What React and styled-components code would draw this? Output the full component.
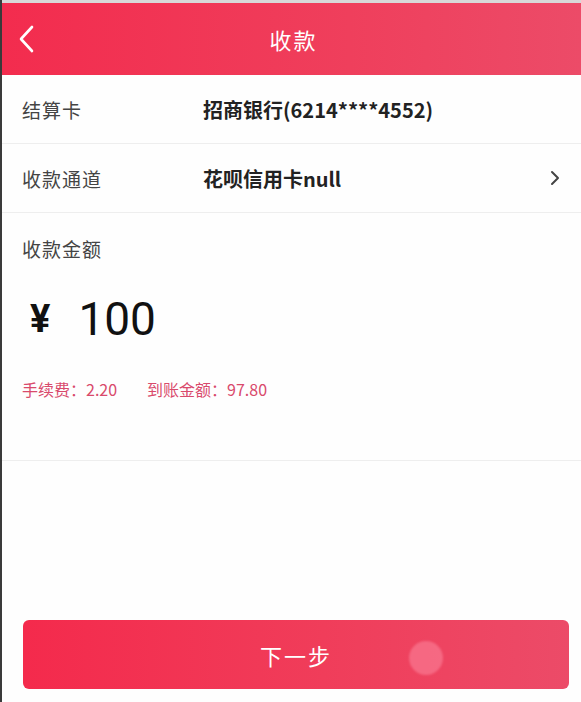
import React from "react";
import styled, { createGlobalStyle } from "styled-components";

const Global = createGlobalStyle`
  html, body { margin: 0; padding: 0; background: #fefefe; }
  body { font-family: "Noto Sans CJK SC", "Noto Sans", sans-serif; }
`;

const Page = styled.div`
  width: 581px;
  height: 702px;
  box-sizing: border-box;
  border-left: 2px solid #3a3a3a;
  background: #fefefe;
  display: flex;
  flex-direction: column;
  position: relative;
  overflow: hidden;
`;

const TopStrip = styled.div`
  height: 3px;
  background: #d8d8d8;
`;

const Header = styled.header`
  height: 72px;
  background: linear-gradient(90deg, #f32c4e 0%, #ef3f5c 60%, #ec4b68 100%);
  display: flex;
  align-items: center;
  justify-content: center;
  position: relative;
  color: #fff;
`;

const Back = styled.div`
  position: absolute;
  left: 14px;
  top: 22px;
  width: 22px;
  height: 28px;
`;

const Title = styled.h1`
  margin: 0 0 0 4px;
  font-size: 22px;
  font-weight: 400;
  letter-spacing: 2px;
`;

const Row = styled.div`
  height: 68px;
  display: flex;
  align-items: center;
  padding: 0 20px 0 20px;
  border-bottom: 1px solid #eeeeee;
`;

const Label = styled.span`
  width: 181px;
  font-size: 19px;
  color: #444;
  letter-spacing: 1px;
`;

const Value = styled.span`
  flex: 1;
  font-size: 20px;
  font-weight: 700;
  color: #222;
`;

const Chevron = styled.div`
  width: 12px;
  height: 16px;
  display: flex;
`;

const AmountSection = styled.section`
  height: 248px;
  border-bottom: 1px solid #eeeeee;
  padding: 22px 20px 0;
  box-sizing: border-box;
  display: flex;
  flex-direction: column;
`;

const AmountRow = styled.div`
  display: flex;
  align-items: center;
  margin-top: 27px;
  padding-left: 8px;
  height: 60px;
  color: #111;
  font-family: Roboto, "Open Sans", sans-serif;
`;

const Yen = styled.span`
  font-size: 38px;
  font-weight: 700;
  margin-right: 28px;
`;

const Amount = styled.span`
  font-size: 46px;
  font-weight: 400;
`;

const FeeLine = styled.div`
  margin-top: 28px;
  display: flex;
  gap: 30px;
  font-size: 16px;
  color: #d94a6c;
`;

const Spacer = styled.div`
  flex: 1;
`;

const ButtonWrap = styled.div`
  padding: 0 12px 13px 21px;
`;

const NextButton = styled.button`
  width: 100%;
  height: 69px;
  border: none;
  border-radius: 6px;
  background: linear-gradient(90deg, #f42a4c 0%, #f03d5a 55%, #ec4b68 100%);
  color: #fff;
  font-family: "Noto Sans CJK SC", sans-serif;
  font-size: 22px;
  letter-spacing: 2px;
  position: relative;
  cursor: pointer;
`;

const Ripple = styled.span`
  position: absolute;
  left: 386px;
  top: 21px;
  width: 34px;
  height: 34px;
  border-radius: 50%;
  background: rgba(255, 150, 172, 0.45);
  filter: blur(1px);
`;

export default function App() {
  return (
    <>
      <Global />
      <Page>
        <TopStrip />
        <Header>
          <Back>
            <svg width="22" height="28" viewBox="0 0 22 28">
              <path d="M16 2 L5 14 L16 26" fill="none" stroke="#fff" strokeWidth="2.6" strokeLinecap="round" strokeLinejoin="round" />
            </svg>
          </Back>
          <Title>收款</Title>
        </Header>
        <Row>
          <Label>结算卡</Label>
          <Value>招商银行(6214****4552)</Value>
        </Row>
        <Row>
          <Label>收款通道</Label>
          <Value>花呗信用卡null</Value>
          <Chevron>
            <svg width="12" height="16" viewBox="0 0 12 16">
              <path d="M3 2 L9 8 L3 14" fill="none" stroke="#444" strokeWidth="2" strokeLinecap="round" strokeLinejoin="round" />
            </svg>
          </Chevron>
        </Row>
        <AmountSection>
          <Label>收款金额</Label>
          <AmountRow>
            <Yen>¥</Yen>
            <Amount>100</Amount>
          </AmountRow>
          <FeeLine>
            <span>手续费：2.20</span>
            <span>到账金额：97.80</span>
          </FeeLine>
        </AmountSection>
        <Spacer />
        <ButtonWrap>
          <NextButton>
            下一步
            <Ripple />
          </NextButton>
        </ButtonWrap>
      </Page>
    </>
  );
}
